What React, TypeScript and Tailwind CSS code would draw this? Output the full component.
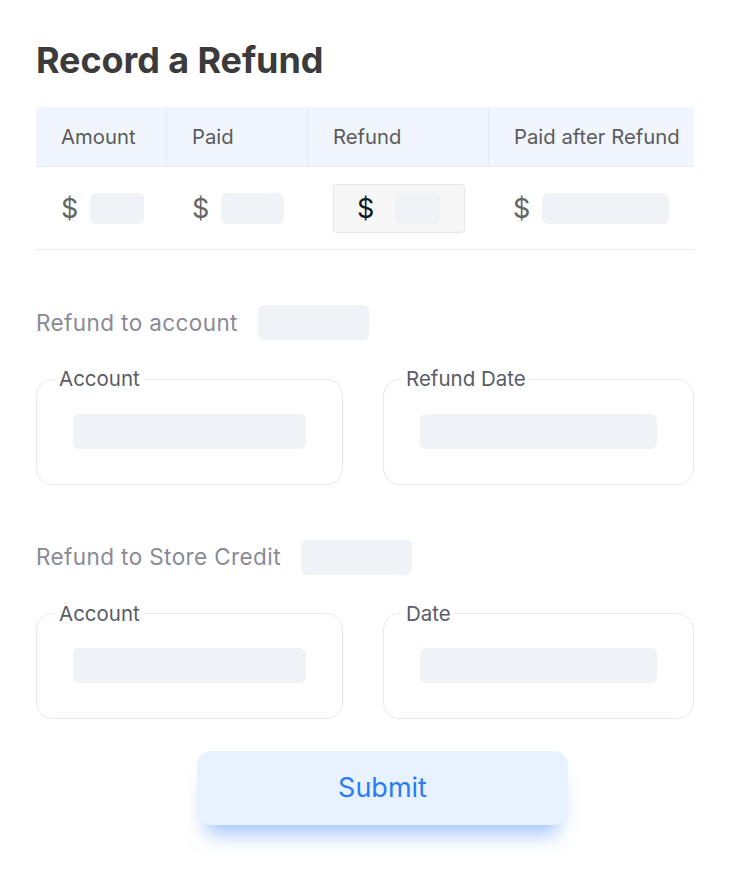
const columns = [
  { label: 'Amount', width: 'w-[131px]' },
  { label: 'Paid', width: 'w-[141px]' },
  { label: 'Refund', width: 'w-[181px]' },
  { label: 'Paid after Refund', width: 'flex-1' },
];

function Field({ className }: { className: string }) {
  return <div className={`h-[31px] rounded-md bg-[#eff3f7] ${className}`} />;
}

function Dollar({ dark }: { dark?: boolean }) {
  return (
    <span className={`text-[27px] leading-none ${dark ? 'text-[#16182b]' : 'text-[#666]'}`}>$</span>
  );
}

function BoxField({ label }: { label: string }) {
  return (
    <fieldset className="rounded-2xl border border-[#e9e9ec] px-9 pb-[35px] pt-[24px]">
      <legend className="-ml-[18px] px-[4px] text-[20.5px] leading-none text-[#595c68]">
        {label}
      </legend>
      <div className="h-[35px] rounded-md bg-[#eff3f7]" />
    </fieldset>
  );
}

function RefundSection({ title, left, right }: { title: string; left: string; right: string }) {
  return (
    <section>
      <div className="flex items-center gap-[20px]">
        <span className="text-[22.5px] tracking-[0.4px] text-[#8a8a96]">{title}</span>
        <div className="h-[35px] w-[111px] rounded-md bg-[#eff3f7]" />
      </div>
      <div className="mt-[29px] grid grid-cols-[307px_1fr] gap-10">
        <BoxField label={left} />
        <BoxField label={right} />
      </div>
    </section>
  );
}

export default function App() {
  return (
    <div
      className="min-h-[887px] w-full bg-white px-9 pt-[40px]"
      style={{ fontFamily: 'Inter, "Noto Sans", sans-serif' }}
    >
      <h1 className="text-[36px] font-bold leading-10 tracking-[-0.1px] text-[#3b3b3b]">
        Record a Refund
      </h1>

      <div className="mt-[27px] w-[658px]">
        <div className="flex h-[60px] border-b border-[#e8ecf2] bg-[#f0f5fe]">
          {columns.map((col, i) => (
            <div
              key={col.label}
              className={`flex items-center pl-[25px] pt-[2px] text-[20.3px] text-[#5b5b5b] ${col.width} ${
                i < columns.length - 1 ? 'border-r border-[#e4e9f1]' : ''
              }`}
            >
              {col.label}
            </div>
          ))}
        </div>
        <div className="flex h-[83px] items-center border-b border-[#ebebeb]">
          <div className="flex w-[131px] items-center gap-[12px] pl-[25px]">
            <Dollar />
            <Field className="w-[54px]" />
          </div>
          <div className="flex w-[141px] items-center gap-[12px] pl-[25px]">
            <Dollar />
            <Field className="w-[63px]" />
          </div>
          <div className="w-[181px] pl-[25px]">
            <div className="flex h-[49px] w-[132px] items-center gap-[21px] rounded-sm border border-[#e6e6e6] bg-[#f7f7f7] pl-[23px]">
              <Dollar dark />
              <Field className="w-[45px]" />
            </div>
          </div>
          <div className="flex flex-1 items-center gap-[12px] pl-[24px]">
            <Dollar />
            <Field className="w-[127px]" />
          </div>
        </div>
      </div>

      <div className="mt-[55px] flex w-[658px] flex-col gap-[55px]">
        <RefundSection title="Refund to account" left="Account" right="Refund Date" />
        <RefundSection title="Refund to Store Credit" left="Account" right="Date" />
      </div>

      <button
        type="button"
        className="ml-[161px] mt-[32px] h-[74px] w-[371px] rounded-[14px] bg-[#e8f1fe] text-[27px] text-[#2a7cf6] shadow-[0_18px_20px_-10px_rgba(59,130,246,0.5)]"
      >
        Submit
      </button>
    </div>
  );
}
